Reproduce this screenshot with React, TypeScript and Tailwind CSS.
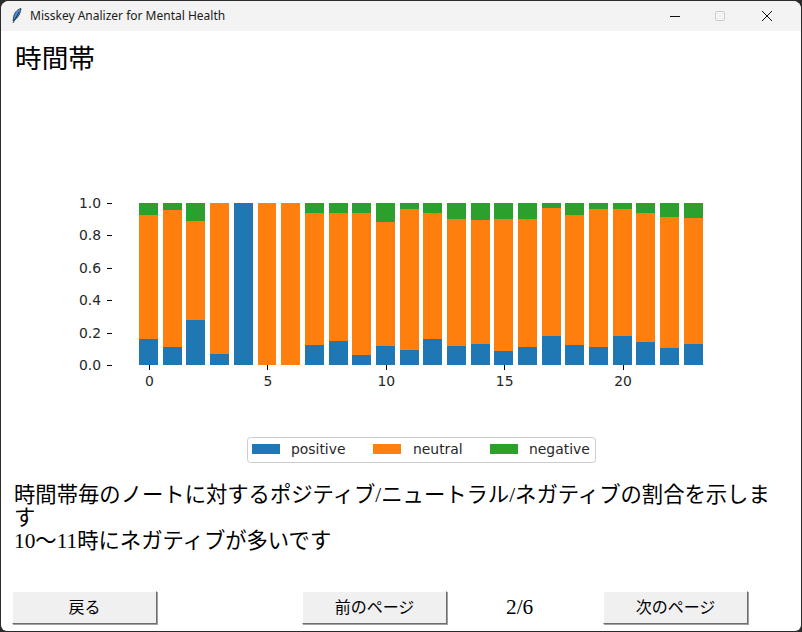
const serif = "font-['Liberation_Serif','Noto_Sans_CJK_JP',serif]"

// [positive, positive + neutral] per hour
const hours: [number, number][] = [
  [0.16, 0.926], [0.111, 0.957], [0.278, 0.889], [0.068, 1], [1, 1], [0, 1],
  [0, 1], [0.123, 0.938], [0.148, 0.938], [0.062, 0.938], [0.117, 0.883], [0.093, 0.963],
  [0.16, 0.938], [0.117, 0.901], [0.13, 0.895], [0.086, 0.901], [0.111, 0.901], [0.179, 0.969],
  [0.123, 0.926], [0.111, 0.963], [0.179, 0.963], [0.142, 0.938], [0.105, 0.914], [0.13, 0.907],
]

const top = 127
const bottom = 289
const yOf = (v: number) => Math.round(bottom - v * (bottom - top))

function Chart() {
  return (
    <svg width="800" height="400" className="block shrink-0" fontFamily="'DejaVu Sans', sans-serif" fontSize="13.9" fill="#262626">
      {hours.map(([pos, neu], i) => {
        const x1 = Math.round(147.6 + i * 23.68 - 9.47)
        const x2 = Math.round(147.6 + i * 23.68 + 9.47)
        return (
          <g key={i} shapeRendering="crispEdges">
            <rect x={x1} y={top} width={x2 - x1} height={yOf(neu) - top} fill="#2ca02c" />
            <rect x={x1} y={yOf(neu)} width={x2 - x1} height={yOf(pos) - yOf(neu)} fill="#ff7f0e" />
            <rect x={x1} y={yOf(pos)} width={x2 - x1} height={bottom - yOf(pos)} fill="#1f77b4" />
          </g>
        )
      })}
      {[0, 0.2, 0.4, 0.6, 0.8, 1].map((v) => (
        <g key={v}>
          <rect x="106" y={yOf(v)} width="5" height="1" fill="#000" shapeRendering="crispEdges" />
          <text x="100" y={yOf(v) + 5} textAnchor="end">{v.toFixed(1)}</text>
        </g>
      ))}
      {[0, 5, 10, 15, 20].map((v) => (
        <g key={v}>
          <rect x={Math.round(148 + v * 23.68)} y={bottom} width="1" height="5" fill="#000" shapeRendering="crispEdges" />
          <text x={148.5 + v * 23.68} y={bottom + 21} textAnchor="middle">{v}</text>
        </g>
      ))}
      <rect x="246.5" y="361.5" width="348" height="25" rx="3" fill="#fff" stroke="#ccc" />
      <rect x="251" y="368" width="28" height="10" fill="#1f77b4" />
      <text x="290" y="378">positive</text>
      <rect x="372" y="368" width="28" height="10" fill="#ff7f0e" />
      <text x="412" y="378">neutral</text>
      <rect x="489" y="368" width="28" height="10" fill="#2ca02c" />
      <text x="528" y="378">negative</text>
    </svg>
  )
}

function TkButton({ label, className }: { label: string; className?: string }) {
  return (
    <button
      className={`h-[33px] w-[145px] shrink-0 border border-t-white border-l-white border-r-[#6d6d6d] border-b-[#6d6d6d] bg-[#f0f0f0] text-[16px] leading-none text-black shadow-[1px_1px_0_#a0a0a0] ${serif} ${className ?? ""}`}
    >
      {label}
    </button>
  )
}

export default function App() {
  return (
    <div className="flex h-[632px] w-[802px] flex-col overflow-hidden bg-[#2b2b2b] p-px">
      <div className="flex flex-1 flex-col overflow-hidden rounded-t-lg rounded-b-md bg-white">
        <div className="flex h-[30px] shrink-0 items-center bg-[#f3f3f3] pl-[11px]">
          <svg width="10" height="16" viewBox="0 0 10 16">
            <path d="M9 0.5C5 1.5 2 5 1.5 10L1 13L3 11.5C6 10 8.5 5 9 0.5Z" fill="#4a90d9" stroke="#1c2a3a" strokeWidth="0.8" />
            <path d="M7 4L1 15" stroke="#1c2a3a" strokeWidth="0.9" />
          </svg>
          <span className="ml-[8px] font-['Noto_Sans',sans-serif] text-[12px] text-[#1a1a1a]">Misskey Analizer for Mental Health</span>
          <div className="ml-auto flex items-center">
            <svg width="120" height="30" viewBox="0 0 120 30" className="mr-[11px]">
              <path d="M0 15.5H10" stroke="#111" strokeWidth="1" />
              <rect x="45.5" y="10.5" width="9" height="9" rx="1" fill="none" stroke="#ccc" />
              <path d="M92 10L102 20M102 10L92 20" stroke="#111" strokeWidth="1" />
            </svg>
          </div>
        </div>

        <main className={`flex min-h-0 flex-1 flex-col text-black ${serif}`}>
          <h1 className="h-[45px] shrink-0 pl-[14px] pt-[10px] text-[26.67px] leading-[36px] font-normal">時間帯</h1>
          <Chart />
          <p className="mt-[8px] w-[770px] pl-[13px] text-[21.33px] leading-[23px]">
            時間帯毎のノートに対するポジティブ/ニュートラル/ネガティブの割合を示します
            <br />
            10～11時にネガティブが多いです
          </p>
          <footer className="mt-auto mb-[7px] flex items-center pl-[11px]">
            <TkButton label="戻る" />
            <TkButton label="前のページ" className="ml-[145px]" />
            <span className="ml-[59px] w-[27px] text-center text-[21.33px] leading-none">2/6</span>
            <TkButton label="次のページ" className="ml-[70px]" />
          </footer>
        </main>
      </div>
    </div>
  )
}
